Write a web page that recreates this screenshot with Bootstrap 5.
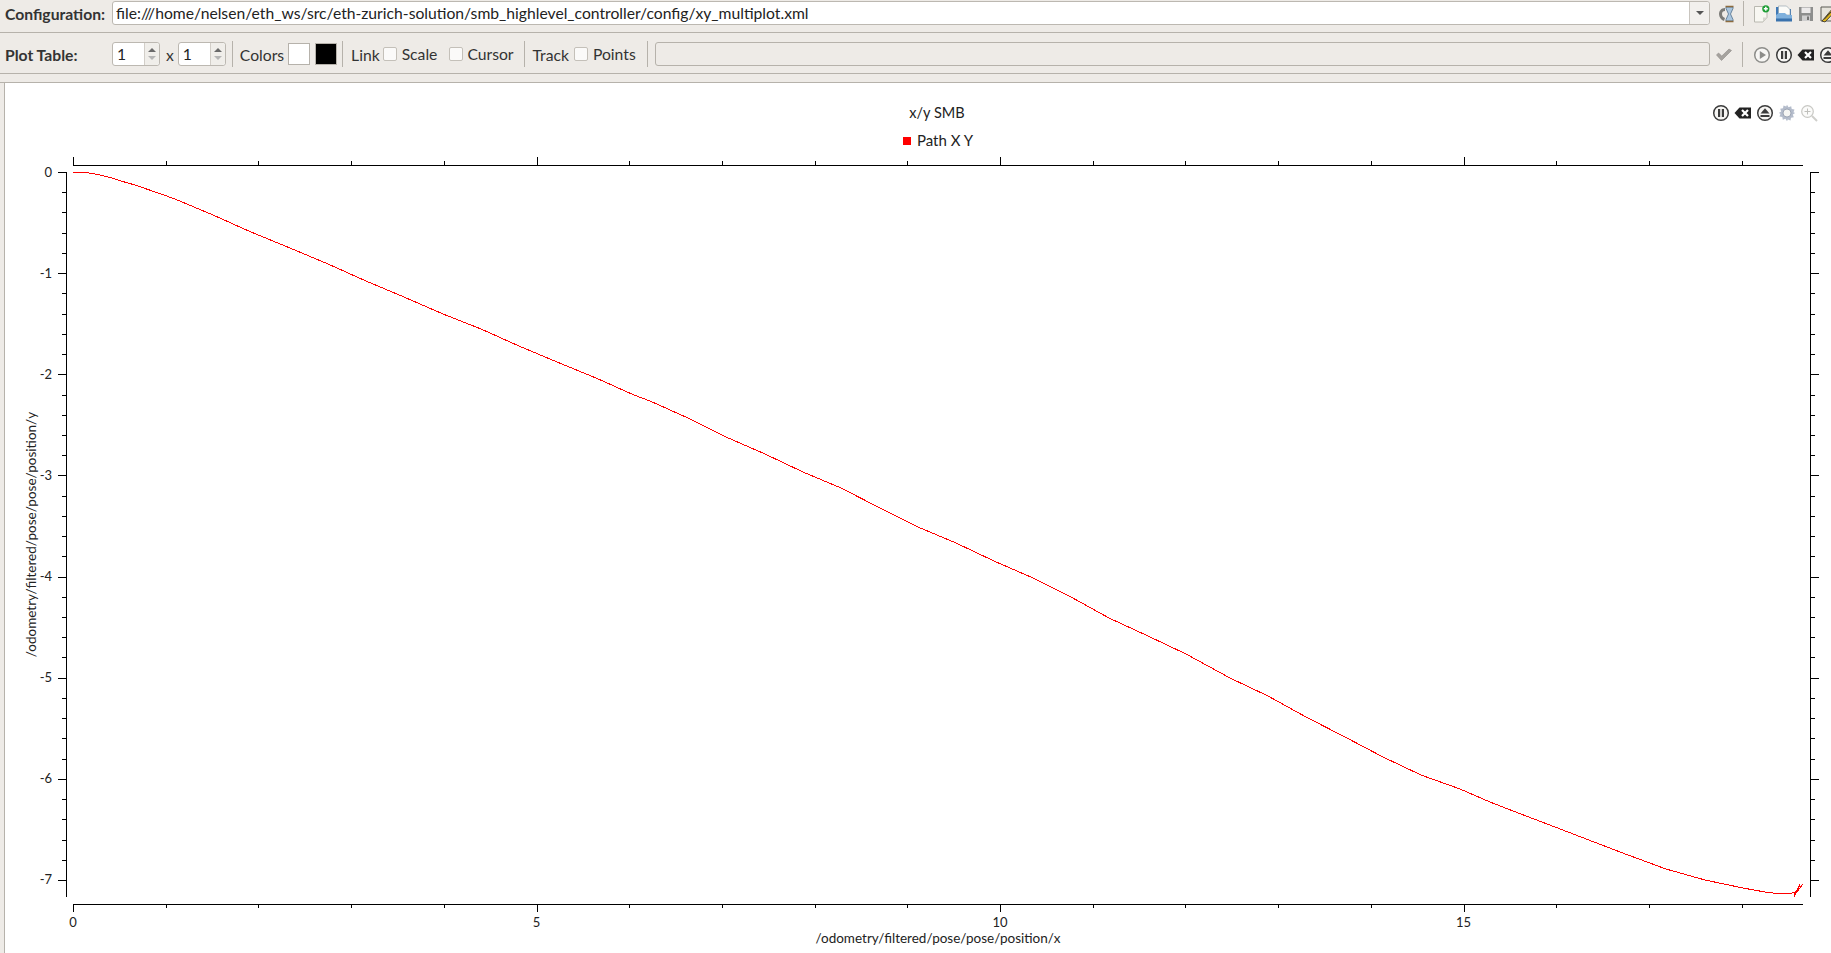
<!DOCTYPE html>
<html lang="en">
<head>
  <meta charset="UTF-8">
  <title>xy_multiplot</title>
  <link href="https://cdn.jsdelivr.net/npm/bootstrap@5.3.0/dist/css/bootstrap.min.css" rel="stylesheet">
  <style>
    html, body { height: 100%; overflow: hidden; }
    body { background: #eeebe7; color: #333; font-family: "Lato", "Liberation Sans", sans-serif; font-size: 15.7px; line-height: 1; }
    .bar-config { height: 33px; padding: 1px 0 0 5px; border-bottom: 1px solid #b6b2ab; }
    .bar-plot { height: 41px; padding: 9px 0 0 5px; border-bottom: 1px solid #b6b2ab; }
    .bar-label { font-weight: 700; width: 107px; flex: none; }
    .bar-config .bar-label { height: 24px; line-height: 26px; }
    .bar-plot .bar-label, .bar-text { height: 24px; line-height: 26px; flex: none; }
    .bar-text-up { line-height: 24px; }
    .qt-field { background: #fff; border: 1px solid #bcb8b1; border-radius: 3px; height: 24px; padding: 0 3px; line-height: 24px; color: #222; font-size: 15.7px; }
    .qt-combo { flex: 1 1 0; min-width: 0; }
    .qt-combo-text { flex: 1 1 0; white-space: nowrap; overflow: hidden; }
    .qt-combo-drop { width: 20px; height: 22px; margin-right: -3px; border-left: 1px solid #c9c5bf; background: #f2f0ed; border-radius: 0 3px 3px 0; }
    .drop-caret { width: 0; height: 0; border-left: 4px solid transparent; border-right: 4px solid transparent; border-top: 4px solid #555; }
    .qt-spin { width: 48px; flex: none; }
    .qt-spin-val { flex: 1 1 0; padding-left: 1px; }
    .qt-spin-arrows { width: 15px; height: 22px; margin-right: -3px; border-left: 1px solid #d2cec8; background: #f0eeea; border-radius: 0 3px 3px 0; }
    .arr-up, .arr-down { width: 0; height: 0; border-left: 4px solid transparent; border-right: 4px solid transparent; }
    .arr-up { border-bottom: 4px solid #6a6a6a; }
    .arr-down { border-top: 4px solid #b5b5b5; }
    .bar-sep { width: 1px; height: 26px; margin-top: -1px; background: #b6b2ab; flex: none; }
    .swatch { width: 22px; height: 22px; flex: none; border: 1px solid #b6b2ab; margin-top: 1px; }
    .swatch-white { background: #fff; }
    .swatch-black { background: #000; }
    .qt-check { width: 14px; height: 14px; flex: none; margin-top: 5px; background: #fbfaf9; border: 1px solid #c4c0b9; border-radius: 2px; }
    .qt-status { background: #eeebe7; border-color: #b6b2ab; flex: 1 1 0; min-width: 0; }
    .tool-side { width: 121px; flex: none; overflow: hidden; }
    .tool-ico { width: 18px; height: 18px; flex: none; display: block; }
    .mx-sp3 { margin-left: 3px; } .mx-sp4 { margin-left: 4px; } .mx-sp5 { margin-left: 5px; } .mx-sp6 { margin-left: 6px; } .mx-sp7 { margin-left: 7px; } .mx-sp8 { margin-left: 8px; } .mx-sp9 { margin-left: 9px; } .mx-sp10 { margin-left: 10px; } .mx-sp11 { margin-left: 11px; } .mx-sp12 { margin-left: 12px; }
    .gap-band { height: 9px; border-bottom: 1px solid #b6b2ab; }
    .plot-pane { margin-left: 4px; border-left: 1px solid #b6b2ab; background: #fff; height: 870px; }
    #plotSvg { display: block; }
    #plotSvg text { font-family: "Lato", "Liberation Sans", sans-serif; fill: #222; }
  </style>
</head>
<body>

  <!-- icon set -->
  <svg width="0" height="0" class="position-absolute">
    <defs>
      <symbol id="i-reload" viewBox="0 0 18 18">
        <path d="M8 3C4 3 2 6 2 9s2 6 5 7l1-3C6 12 5 11 5 9s1-3 3-3z" fill="#7b7b78"/>
        <path d="M9 2h7v1.5L13.5 9 16 14.500V16H9v-1.500L11.500 9 9 3.500z" fill="#a9c5de" stroke="#4f6f8d" stroke-width=".8"/>
        <path d="M8.500 1.500h8M8.500 16.500h8" stroke="#8d6b3e" stroke-width="1.400"/>
      </symbol>
      <symbol id="i-new" viewBox="0 0 18 18">
        <path d="M2.500 1.500H11l4 4v7l-4 4.500H2.500z" fill="#f8f7f2" stroke="#b9b8b0"/>
        <path d="M11 17l0-4.500h4.200z" fill="#d7d6cf"/>
        <circle cx="13.800" cy="3.800" r="3.600" fill="#1f9e36"/>
        <path d="M13.800 1.800v4M11.800 3.800h4" stroke="#fff" stroke-width="1.500"/>
      </symbol>
      <symbol id="i-open" viewBox="0 0 18 18">
        <path d="M1 2h6l2 2h7v12H1z" fill="#3f78b5"/>
        <path d="M3.500 1h8l3.500 3.500V10H3.500z" fill="#fbfbf8" stroke="#8a9aa8" stroke-width=".6"/>
        <path d="M1 10l3-2h6l2 2h5v6H1z" fill="#7fb0dc"/>
        <path d="M1 13.500h16v3H1z" fill="#3a72ad"/>
      </symbol>
      <symbol id="i-save" viewBox="0 0 18 18">
        <path d="M2 2h14v14H2z" fill="#8d8e8d"/>
        <path d="M4.500 2.500h9v5.500h-9z" fill="#eceaea"/>
        <path d="M5 10.500h8V16H5z" fill="#cfcfcf"/>
        <path d="M10 11.500h2V15h-2z" fill="#757575"/>
      </symbol>
      <symbol id="i-edit" viewBox="0 0 18 18">
        <path d="M2 2h13v14H2z" fill="#e6e4dc" stroke="#5b5b55"/>
        <path d="M3 16L14 3l3 2.500L6 17z" fill="#e2b81f" stroke="#2c2c2c" stroke-width=".8"/>
        <path d="M5 14.500L15 4" stroke="#2c2c2c" stroke-width="1"/>
      </symbol>
      <symbol id="i-check" viewBox="0 0 18 14">
        <path d="M1.500 7L6.500 12.500 16.500 2.500 14 1 6.800 8 3.500 5z" fill="#a5a29e" stroke="#8f8c88" stroke-width=".6"/>
      </symbol>
      <symbol id="i-play" viewBox="0 0 18 18">
        <circle cx="9" cy="9" r="7.300" fill="#f7f6f4" stroke="#8d8d8a" stroke-width="1.500"/>
        <path d="M6.800 5L13 9l-6.200 4z" fill="#8d8d8a"/>
      </symbol>
      <symbol id="i-pause" viewBox="0 0 18 18">
        <circle cx="9" cy="9" r="7.300" fill="#f7f6f4" stroke="#3c3c3c" stroke-width="1.500"/>
        <path d="M6 5h2.200v8H6zM9.800 5H12v8H9.800z" fill="#3c3c3c"/>
      </symbol>
      <symbol id="i-clear" viewBox="0 0 18 18">
        <path d="M5.500 3.500H17v11H5.500L.5 9z" fill="#222"/>
        <path d="M8 6l6 6M14 6l-6 6" stroke="#fff" stroke-width="2.200"/>
      </symbol>
      <symbol id="i-eject" viewBox="0 0 18 18">
        <circle cx="9" cy="9" r="7.300" fill="#f7f6f4" stroke="#3c3c3c" stroke-width="1.500"/>
        <path d="M9 4.200L13.500 9.500h-9z" fill="#3c3c3c"/>
        <path d="M4.500 11h9v2h-9z" fill="#3c3c3c"/>
      </symbol>
      <symbol id="i-gear" viewBox="0 0 18 18">
        <path d="M9 .8l1.500 2.400 2.700-1 .5 2.800 2.800.5-1 2.700L17.200 9l-2.400 1.500 1 2.700-2.800.5-.5 2.800-2.700-1L9 17.200l-1.500-2.400-2.700 1-.5-2.800-2.800-.5 1-2.700L.8 9l2.400-1.500-1-2.700 2.800-.5.500-2.800 2.700 1z" fill="#b4bccb"/>
        <circle cx="9" cy="9" r="4" fill="#f5f5f3" stroke="#8e97a8" stroke-width=".8"/>
      </symbol>
      <symbol id="i-zoom" viewBox="0 0 18 18">
        <circle cx="7.500" cy="7.500" r="5.800" fill="#fbfbfa" stroke="#c8c8c4" stroke-width="1.200"/>
        <path d="M7.500 4.500v6M4.500 7.500h6" stroke="#c0c0bc" stroke-width="1"/>
        <path d="M12 12l5 5" stroke="#cfcfcb" stroke-width="2"/>
      </symbol>
    </defs>
  </svg>

  <div class="bar-config d-flex align-items-start">
    <div class="bar-label">Configuration:</div>
    <div class="qt-field qt-combo d-flex align-items-center">
      <div class="qt-combo-text">file:///home/nelsen/eth_ws/src/eth-zurich-solution/smb_highlevel_controller/config/xy_multiplot.xml</div>
      <div class="qt-combo-drop d-flex align-items-center justify-content-center"><span class="drop-caret"></span></div>
    </div>
    <div class="tool-side d-flex">
      <svg class="tool-ico mx-sp7 mt-1"><use href="#i-reload"/></svg>
      <div class="bar-sep mx-sp8"></div>
      <svg class="tool-ico mx-sp8 mt-1"><use href="#i-new"/></svg>
      <svg class="tool-ico mx-sp5 mt-1"><use href="#i-open"/></svg>
      <svg class="tool-ico mx-sp4 mt-1"><use href="#i-save"/></svg>
      <svg class="tool-ico mx-sp4 mt-1"><use href="#i-edit"/></svg>
    </div>
  </div>

  <div class="bar-plot d-flex align-items-start">
    <div class="bar-label">Plot Table:</div>
    <div class="qt-field qt-spin d-flex align-items-center">
      <div class="qt-spin-val">1</div>
      <div class="qt-spin-arrows d-flex flex-column align-items-center justify-content-center gap-1"><span class="arr-up"></span><span class="arr-down"></span></div>
    </div>
    <div class="bar-text mx-sp6">x</div>
    <div class="qt-field qt-spin d-flex align-items-center mx-sp4">
      <div class="qt-spin-val">1</div>
      <div class="qt-spin-arrows d-flex flex-column align-items-center justify-content-center gap-1"><span class="arr-up"></span><span class="arr-down"></span></div>
    </div>
    <div class="bar-sep mx-sp6"></div>
    <div class="bar-text mx-sp7">Colors</div>
    <div class="swatch swatch-white mx-sp4"></div>
    <div class="swatch swatch-black mx-sp5"></div>
    <div class="bar-sep mx-sp5"></div>
    <div class="bar-text mx-sp8">Link</div>
    <div class="qt-check mx-sp3"></div>
    <div class="bar-text bar-text-up mx-sp5">Scale</div>
    <div class="qt-check mx-sp12"></div>
    <div class="bar-text bar-text-up mx-sp4">Cursor</div>
    <div class="bar-sep mx-sp10"></div>
    <div class="bar-text mx-sp8">Track</div>
    <div class="qt-check mx-sp5"></div>
    <div class="bar-text bar-text-up mx-sp5">Points</div>
    <div class="bar-sep mx-sp11"></div>
    <div class="qt-field qt-status mx-sp7"></div>
    <div class="tool-side d-flex">
      <svg class="tool-ico mx-sp5 mt-1" ><use href="#i-check"/></svg>
      <div class="bar-sep mx-sp9"></div>
      <svg class="tool-ico mx-sp10 mt-1"><use href="#i-play"/></svg>
      <svg class="tool-ico mx-sp4 mt-1"><use href="#i-pause"/></svg>
      <svg class="tool-ico mx-sp4 mt-1"><use href="#i-clear"/></svg>
      <svg class="tool-ico mx-sp4 mt-1"><use href="#i-eject"/></svg>
    </div>
  </div>

  <div class="gap-band"></div>

  <div class="plot-pane">
    <svg id="plotSvg" width="1826" height="870" viewBox="5 83 1826 870"></svg>
  </div>

  <script src="https://cdn.jsdelivr.net/npm/bootstrap@5.3.0/dist/js/bootstrap.bundle.min.js"></script>
  <script>
    // plot area, in page pixels
    const xAt = v => 73 + v * 92.7;
    const yAt = v => 172 - v * 101.14;

    // traced from the recorded path
    const pathPoints = [[73,172],[86,172.500],[98,174.500],[110,177.500],[121,181],[135,185],[148,189.500],[161,194],[175,199],[194,207],[213,215],[251,232],[290,248],[328,264],[366,281],[404,297],[443,314],[481,329],[519,346],[557,362],[596,378],[634,395],[650,401],[688,418],[726,437],[765,454],[803,472],[841,488],[880,508],[918,527],[956,543],[994,561],[1033,578],[1071,597],[1109,618],[1148,636],[1186,654],[1230,678],[1268,696],[1306,717],[1345,737],[1383,757],[1421,775],[1460,789],[1490,802],[1513,811],[1555,827],[1594,842],[1628,855],[1666,869],[1705,880],[1743,888],[1765,892],[1781,894],[1790,893.500],[1795,892],[1794,897],[1800,884],[1797,892],[1803,884],[1796,893]];

    function hLine(x1, x2, y) { return `<line x1="${x1}" x2="${x2}" y1="${Math.round(y) + .5}" y2="${Math.round(y) + .5}"/>`; }
    function vLine(x, y1, y2) { return `<line x1="${Math.round(x) + .5}" x2="${Math.round(x) + .5}" y1="${y1}" y2="${y2}"/>`; }

    function renderPlot() {
      let axes = '';
      let labels = '';

      // top and bottom x axes
      axes += hLine(73, 1803, 165) + hLine(73, 1803, 904);
      for (let i = 0; i <= 18; i++) {
        const major = i % 5 === 0;
        axes += vLine(xAt(i), major ? 157 : 161, 165);
        axes += vLine(xAt(i), 904, major ? 912 : 908);
        if (major) labels += `<text x="${xAt(i)}" y="927" font-size="13" text-anchor="middle">${i}</text>`;
      }

      // left and right y axes
      axes += vLine(66, 172, 897) + vLine(1810, 172, 897);
      for (let i = 0; i <= 35; i++) {
        const y = yAt(-i / 5);
        const major = i % 5 === 0;
        axes += hLine(major ? 58 : 62, 66, y);
        axes += hLine(1810, major ? 1819 : 1815, y);
        if (major) labels += `<text x="52" y="${y + 4.500}" font-size="13" text-anchor="end">${i === 0 ? '0' : '-' + i / 5}</text>`;
      }

      const points = pathPoints.map(p => p.join(',')).join(' ');
      const icons = [['i-pause', 1712], ['i-clear', 1734], ['i-eject', 1756], ['i-gear', 1778], ['i-zoom', 1800]]
        .map(([id, x]) => `<use href="#${id}" x="${x}" y="104" width="18" height="18"/>`).join('');

      document.getElementById('plotSvg').innerHTML = `
        <g stroke="#000" stroke-width="1" shape-rendering="crispEdges">${axes}</g>
        <polyline points="${points}" fill="none" stroke="#f00" stroke-width="1" shape-rendering="crispEdges"/>
        ${labels}
        <text x="937" y="118" font-size="14.500" text-anchor="middle">x/y SMB</text>
        <rect x="903" y="137" width="8" height="8" fill="#f00"/>
        <text x="917" y="146" font-size="15">Path X Y</text>
        <text x="938" y="943" font-size="13.500" text-anchor="middle">/odometry/filtered/pose/pose/position/x</text>
        <text transform="translate(36 534.500) rotate(-90)" font-size="13.500" text-anchor="middle">/odometry/filtered/pose/pose/position/y</text>
        ${icons}`;
    }

    renderPlot();
  </script>
</body>
</html>
